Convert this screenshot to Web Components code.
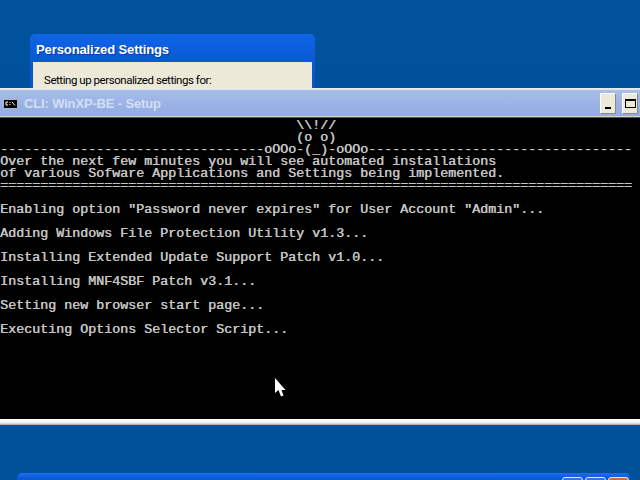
<!DOCTYPE html>
<html>
<head>
<meta charset="utf-8">
<title>CLI: WinXP-BE - Setup</title>
<style>
  html, body { margin: 0; padding: 0; background: #00529b; overflow: hidden; }
</style>
</head>
<body>
<xp-desktop>
  <xp-dialog title="Personalized Settings">Setting up personalized settings for:</xp-dialog>
  <xp-console title="CLI: WinXP-BE - Setup">                                     \\!//
                                     (o o)
---------------------------------oOOo-(_)-oOOo---------------------------------
Over the next few minutes you will see automated installations
of various Sofware Applications and Settings being implemented.
===============================================================================

Enabling option "Password never expires" for User Account "Admin"...

Adding Windows File Protection Utility v1.3...

Installing Extended Update Support Patch v1.0...

Installing MNF4SBF Patch v3.1...

Setting new browser start page...

Executing Options Selector Script...</xp-console>
  <xp-backwindow></xp-backwindow>
  <xp-pointer></xp-pointer>
</xp-desktop>

<script>
// desktop: free canvas, the windows are placed on it
class XpDesktop extends HTMLElement {
    constructor() {
        super();
        this.attachShadow({ mode: "open" });
        this.shadowRoot.innerHTML = `
<style>
    :host{
        display: block;
        position: relative;
        width: 640px;
        height: 480px;
        overflow: hidden;
        background: linear-gradient(#00529c, #00509a);
    }
</style>
<slot></slot>`;
    }
}

// the blue dialog behind the console
class XpDialog extends HTMLElement {
    constructor() {
        super();
        this.attachShadow({ mode: "open" });
        this.shadowRoot.innerHTML = `
<style>
    :host{
        display: flex;
        flex-direction: column;
        position: absolute;
        left: 30px;
        top: 34px;
        width: 285px;
        height: 56px;
        box-sizing: border-box;
        background: linear-gradient(#0f66e6 0, #0a5ad8 40%, #0a52c8 100%);
        border-radius: 5px 5px 0 0;
        padding: 0 3px;
    }
    .bar{
        height: 28px;
        flex: none;
        padding: 2px 0 0 3px;
        box-sizing: border-box;
        display: flex;
        align-items: center;
        color: #fff;
        font: bold 13px "Liberation Sans", Arial, sans-serif;
        letter-spacing: -0.1px;
        text-shadow: 1px 1px 1px #0a3a9c;
    }
    .body{
        flex: 1;
        background: #ece9d8;
        color: #000;
        font: 11.5px/14px Roboto, Arial, sans-serif;
        padding: 11px 0 0 11px;
        letter-spacing: -0.45px;
    }
</style>
<div class="bar" id="bar"></div>
<div class="body"><slot></slot></div>`;
    }
    connectedCallback() {
        this.shadowRoot.querySelector("#bar").textContent = this.getAttribute("title");
    }
}

// the console window, text goes in through the slot
class XpConsole extends HTMLElement {
    constructor() {
        super();
        this.attachShadow({ mode: "open" });
        this.shadowRoot.innerHTML = `
<style>
    :host{
        display: flex;
        flex-direction: column;
        position: absolute;
        left: 0;
        top: 88px;
        width: 640px;
        height: 337px;
        background: #ece9d8;
        border-top: 2px solid #e6e9e8;
        box-sizing: border-box;
    }
    .bar{
        height: 27px;
        flex: none;
        display: flex;
        align-items: center;
        gap: 6px;
        padding: 0 2px 0 3px;
        box-sizing: border-box;
        background: linear-gradient(#a9bfe9 0, #9bb3e6 50%, #93ade2 100%);
        border-bottom: 1px solid #d6d6c8;
        color: #d3dff5;
        font: bold 13px "Liberation Sans", Arial, sans-serif;
        letter-spacing: -0.15px;
    }
    .icon{ flex: none; width: 15px; height: 11px; }
    .title{ flex: 1; }
    .btn{
        flex: none;
        width: 16px;
        height: 21px;
        box-sizing: border-box;
        background: #ece9d8;
        border: 1px solid;
        border-color: #fff #8a8a7c #8a8a7c #fff;
        display: flex;
        align-items: center;
        justify-content: center;
    }
    .min{ width: 6px; height: 2px; background: #000; margin-top: 9px; }
    .max{ width: 11px; height: 9px; box-sizing: border-box; border: 1px solid #000; border-top-width: 2px; }
    .screen{
        flex: 1;
        background: #000;
        border-top: 1px solid #55554e;
        padding-top: 2px;
        color: #c4c4c4;
        font: 13.33px/12px "Liberation Mono", "Courier New", monospace;
        text-shadow: 0.6px 0 #c4c4c4;
        white-space: pre;
        overflow: hidden;
    }
    .edge{
        flex: none;
        height: 6px;
        background: linear-gradient(#fff 0, #f2f2f2 60%, #a8a8a0 100%);
    }
</style>
<div class="bar">
    <svg class="icon" viewBox="0 0 15 11">
        <rect width="15" height="11" fill="#aab4c8"/>
        <rect x="1" y="2" width="13" height="8" fill="#000"/>
        <path d="M3 4h2M3 4v3M3 7h2M7 4v1M7 6v1M9 4l3 3.500" stroke="#fff" fill="none"/>
    </svg>
    <span class="title" id="title"></span>
    <div class="btn"><div class="min"></div></div>
    <div class="btn"><div class="max"></div></div>
</div>
<div class="screen"><slot></slot></div>
<div class="edge"></div>`;
    }
    connectedCallback() {
        this.shadowRoot.querySelector("#title").textContent = this.getAttribute("title");
    }
}

// top edge of the window at the bottom of the screen
class XpBackWindow extends HTMLElement {
    constructor() {
        super();
        this.attachShadow({ mode: "open" });
        this.shadowRoot.innerHTML = `
<style>
    :host{
        display: flex;
        justify-content: flex-end;
        gap: 2px;
        position: absolute;
        left: 17px;
        top: 473px;
        width: 613px;
        height: 30px;
        padding: 4px 1px 0 0;
        box-sizing: border-box;
        border-radius: 5px 5px 0 0;
        background: linear-gradient(#1a6ff0, #0a5ad8 5px);
    }
    .b{ width: 21px; height: 21px; box-sizing: border-box; border: 1px solid #dfe8f8; border-radius: 3px; background: #3a70dc; }
    .b.x{ background: #d8663f; }
</style>
<div class="b"></div><div class="b"></div><div class="b x"></div>`;
    }
}

// mouse pointer
class XpPointer extends HTMLElement {
    constructor() {
        super();
        this.attachShadow({ mode: "open" });
        this.shadowRoot.innerHTML = `
<style>
    :host{
        display: block;
        position: absolute;
        left: 275px;
        top: 378px;
        width: 12px;
        height: 20px;
    }
    svg{ display: block; }
</style>
<svg width="12" height="20" viewBox="0 0 12 20">
    <path d="M0 0V15L3.500 12L6 18.500L8.500 17.500L6.500 12H10.500Z" fill="#fff"/>
</svg>`;
    }
}

customElements.define("xp-desktop", XpDesktop);
customElements.define("xp-dialog", XpDialog);
customElements.define("xp-console", XpConsole);
customElements.define("xp-backwindow", XpBackWindow);
customElements.define("xp-pointer", XpPointer);
</script>
</body>
</html>
